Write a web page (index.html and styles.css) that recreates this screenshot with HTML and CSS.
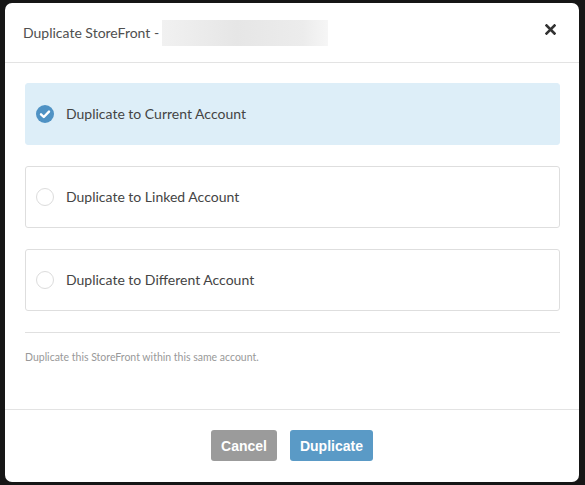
FILE: index.html
```html
<!DOCTYPE html>
<html>
<head>
    <title>Duplicate StoreFront</title>
    <link rel="stylesheet" href="styles.css">
</head>
<body>
    <!-- Duplicate dialog -->
    <div class="modal">
        <div class="modal-header">
            <h2 class="modal-title">Duplicate StoreFront - <span class="blurred-name"></span></h2>
            <button class="close-btn" aria-label="Close">
                <svg width="11" height="11" viewBox="0 0 11 11">
                    <path d="M1.5 1.5 L9.5 9.5 M9.5 1.5 L1.5 9.5" stroke="#333" stroke-width="2.6" stroke-linecap="square"/>
                </svg>
            </button>
        </div>

        <div class="modal-body">
            <!-- Duplicate options -->
            <div class="option selected">
                <span class="radio">
                    <svg width="18" height="18" viewBox="0 0 18 18">
                        <circle cx="9" cy="9" r="9" fill="#4f92c4"/>
                        <path d="M5 9.3 L7.8 12 L13 6.6" fill="none" stroke="#fff" stroke-width="2.4" stroke-linecap="round" stroke-linejoin="round"/>
                    </svg>
                </span>
                <span class="option-label">Duplicate to Current Account</span>
            </div>
            <div class="option">
                <span class="radio empty"></span>
                <span class="option-label">Duplicate to Linked Account</span>
            </div>
            <div class="option">
                <span class="radio empty"></span>
                <span class="option-label">Duplicate to Different Account</span>
            </div>

            <hr class="divider">
            <p class="help-text">Duplicate this StoreFront within this same account.</p>
        </div>

        <div class="modal-footer">
            <button class="btn btn-cancel">Cancel</button>
            <button class="btn btn-primary">Duplicate</button>
        </div>
    </div>
</body>
</html>
```

FILE: styles.css
```css
body {
    background-color: #161616; /* Dark page overlay */
    font-family: Lato, "Open Sans", sans-serif;
    margin: 0;
    padding: 3px 6px 3px 5px;
}

.modal {
    background-color: #fff;
    border-radius: 7px;
    height: 479px;
    display: flex;
    flex-direction: column;
    overflow: hidden;
}

/* Header */
.modal-header {
    height: 59px;
    border-bottom: 1px solid #e3e3e3;
    display: flex;
    align-items: center;
    justify-content: space-between;
    padding: 0 23px 0 18px;
    flex-shrink: 0;
}

.modal-title {
    margin: 0;
    font-size: 14px;
    font-weight: normal;
    color: #4f4f4f;
    display: flex;
    align-items: center;
}

.blurred-name {
    display: inline-block;
    width: 166px;
    height: 26px;
    margin-left: 3px;
    background: linear-gradient(90deg, #f1f1f1, #e6e6e6 45%, #ececec 85%, #f6f6f6);
}

.close-btn {
    border: none;
    background: none;
    padding: 0;
    display: flex;
    margin-top: -6px;
}

/* Body */
.modal-body {
    flex: 1;
    padding: 20px 19px 0 20px;
    border-bottom: 1px solid #e3e3e3;
}

.option {
    height: 60px;
    border: 1px solid #dedede;
    border-radius: 3px;
    display: flex;
    align-items: center;
    padding-left: 10px;
    margin-bottom: 21px;
}

.option.selected {
    background-color: #ddeef8;
    border-color: #ddeef8;
}

.radio {
    width: 18px;
    height: 18px;
    display: flex;
    margin-right: 12px;
}

.radio.empty {
    box-sizing: border-box;
    border: 1px solid #dcdcdc;
    border-radius: 50%;
}

.option-label {
    font-size: 14px;
    color: #444;
    margin-top: -1px;
}

.divider {
    border: none;
    border-top: 1px solid #e0e0e0;
    margin: 0;
}

.help-text {
    margin: 18px 0 0 0;
    font-size: 10.5px;
    color: #999;
}

/* Footer */
.modal-footer {
    height: 72px;
    display: flex;
    justify-content: center;
    align-items: flex-start;
    padding-top: 20px;
    box-sizing: border-box;
    gap: 13px;
    flex-shrink: 0;
}

.btn {
    height: 31px;
    border: none;
    border-radius: 3px;
    color: #fff;
    font-family: "Liberation Sans", Arial, sans-serif;
    font-size: 14px;
    font-weight: bold;
    padding: 0 10px;
}

.btn-cancel {
    background-color: #9b9b9b;
}

.btn-primary {
    background-color: #5a9ac6;
}
```
